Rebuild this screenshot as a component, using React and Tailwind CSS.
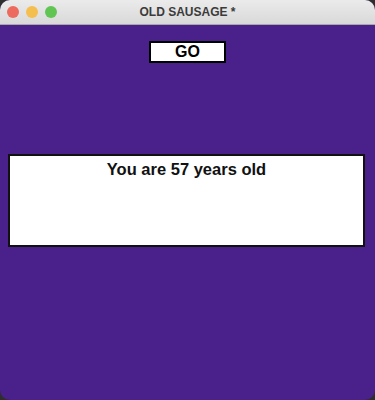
import { useState } from "react";

const Light = ({ color }) => <span className={`w-3 h-3 rounded-full ${color}`} />;

export default function App() {
  const [age] = useState(57);

  return (
    <div className="w-[375px] h-[400px] bg-[#2e2e2e] font-['Liberation_Sans',Arial,sans-serif]">
      <div className="w-full h-full rounded-[10px] overflow-hidden flex flex-col bg-[#4a208a]">
        {/* title bar */}
        <div className="relative h-[25px] shrink-0 flex items-center bg-gradient-to-b from-[#ebebeb] to-[#d9d9d9] border-b border-[#a9a9a9]">
          <div className="flex items-center gap-[7px] pl-[7px]">
            <Light color="bg-[#ec6a5e]" />
            <Light color="bg-[#f4bf4f]" />
            <Light color="bg-[#61c554]" />
          </div>
          <span className="absolute inset-x-0 text-center text-[12px] font-bold text-[#3b3b3b] leading-none">
            OLD SAUSAGE *
          </span>
        </div>

        <div className="flex flex-col">
          <div className="flex justify-center pt-4">
            <button className="w-[77px] h-[22px] bg-white border-2 border-black text-[16px] leading-[18px] font-bold text-black">
              GO
            </button>
          </div>

          <div className="ml-2 mt-[91px] w-[357px] h-[93px] bg-white border-2 border-[#111] pt-px text-center">
            <span className="text-[16.5px] font-bold text-[#111]">You are {age} years old</span>
          </div>
        </div>
      </div>
    </div>
  );
}
